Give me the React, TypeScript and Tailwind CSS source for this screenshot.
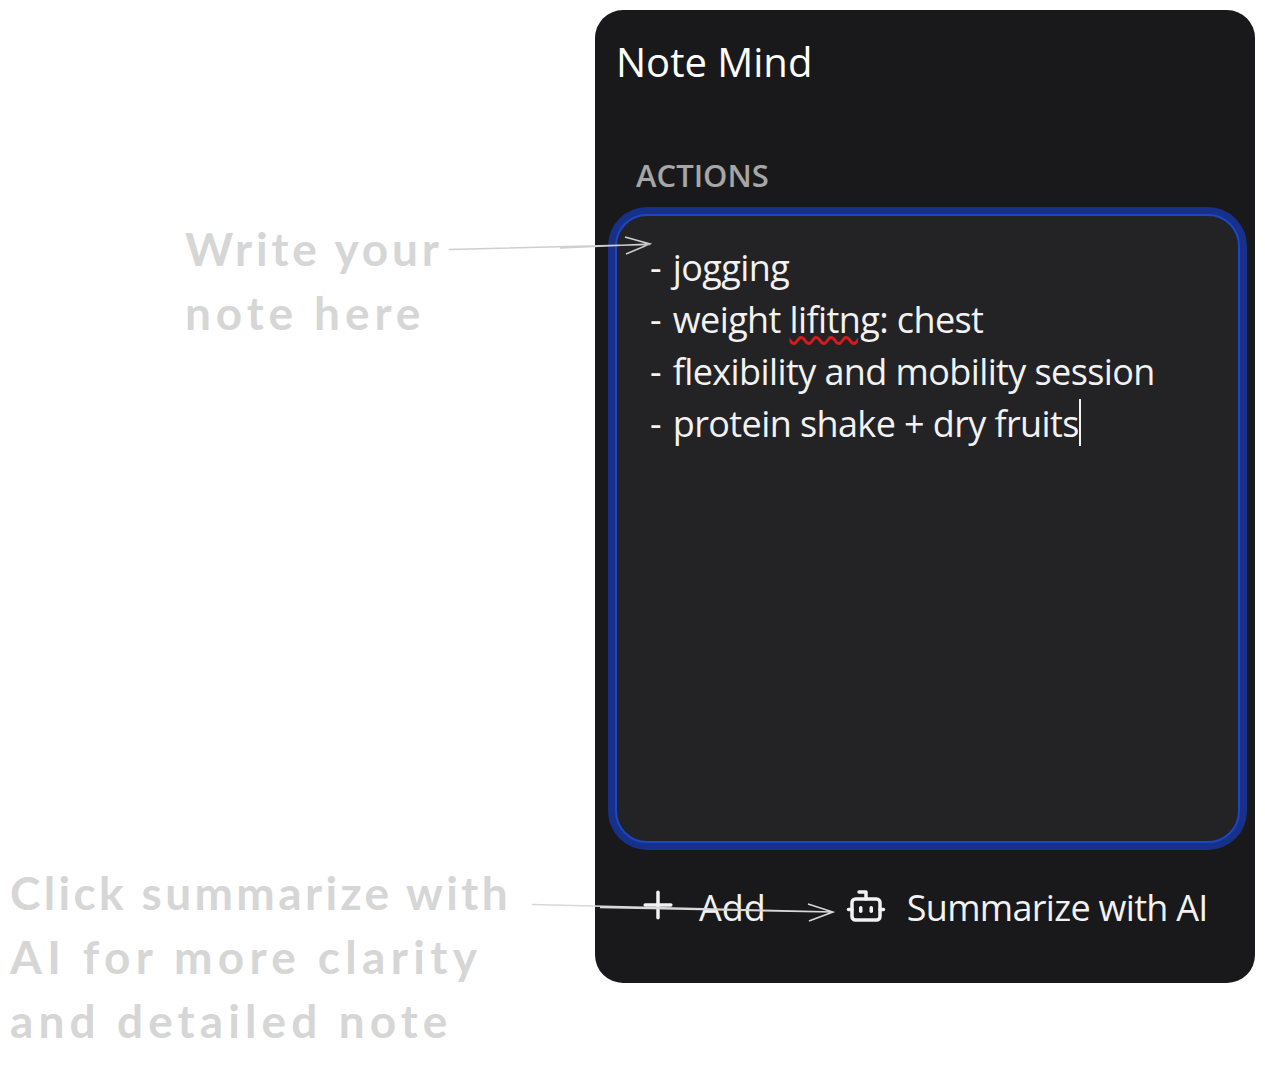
import { Bot, Plus } from "lucide-react";

const hand = "font-['Lato','Liberation_Sans',sans-serif] font-bold text-[#d6d6d6] text-[46px] leading-[64px] whitespace-nowrap";

export default function App() {
  return (
    <div className="relative h-[1065px] w-[1265px] overflow-hidden bg-white font-['Open_Sans','Noto_Sans',sans-serif]">
      <div className="ml-[595px] pt-[10px]">
        <section className="flex h-[973px] w-[660px] flex-col rounded-[28px] bg-[#19191b] px-[20px] text-white">
          <h1 className="mt-[26px] ml-[1px] text-[40px] leading-[52px] font-normal">Note Mind</h1>
          <h2 className="mt-[67px] ml-[21px] text-[31px] leading-[40px] font-semibold text-[#a6a6a6]">ACTIONS</h2>
          <div className="mt-[19px] h-[629px] w-[625px] rounded-[32px] border-[2px] border-[#1b46c8] bg-[#232325] px-[33px] pt-[26px] text-[36px] leading-[52px] tracking-[-0.6px] text-[#f2f2f2] shadow-[0_0_0_7px_#17318a]">
            <p><span className="mr-[3px]">-</span> jogging</p>
            <p><span className="mr-[3px]">-</span> weight <span className="underline decoration-wavy decoration-[#d91a1a] decoration-[3px] underline-offset-[3px]">lifitng</span>: chest</p>
            <p><span className="mr-[3px]">-</span> flexibility and mobility session</p>
            <p><span className="mr-[3px]">-</span> protein shake + dry fruits<span className="-my-[10px] inline-block h-[47px] w-[2px] bg-[#f2f2f2] align-[1px]" /></p>
          </div>
          <div className="mt-[43px] flex items-center text-[36px] leading-[44px] tracking-[-0.6px] text-[#f2f2f2]">
            <Plus className="ml-[21px] -mt-[6px] h-[44px] w-[44px]" strokeWidth={1.9} />
            <span className="ml-[19px] tracking-[0px]">Add</span>
            <Bot className="ml-[79px] -mt-[4px] h-[42px] w-[42px]" strokeWidth={2} />
            <span className="ml-[20px] tracking-[-0.7px]">Summarize with AI</span>
          </div>
        </section>
      </div>

      <div className={`absolute left-[185px] top-[217px] ${hand}`}>
        <p className="tracking-[3.8px]">Write your</p>
        <p className="tracking-[4.9px]">note here</p>
      </div>
      <div className={`absolute left-[10px] top-[861px] ${hand}`}>
        <p className="tracking-[3.35px]">Click summarize with</p>
        <p className="tracking-[5.35px]">AI for more clarity</p>
        <p className="tracking-[5.1px]">and detailed note</p>
      </div>

      <svg className="pointer-events-none absolute left-0 top-0" width="1265" height="1065" fill="none">
        <path d="M449 249.5 L650 244.5 M560 248 L650 244 M625 237 L650 244 L626 254" stroke="#cfcfcf" strokeWidth="1.5" />
        <path d="M532 904.5 L833 912 M600 907.5 L833 912 M808 904 L833 912 L809 921" stroke="#d8d8d8" strokeWidth="1.5" />
      </svg>
    </div>
  );
}
